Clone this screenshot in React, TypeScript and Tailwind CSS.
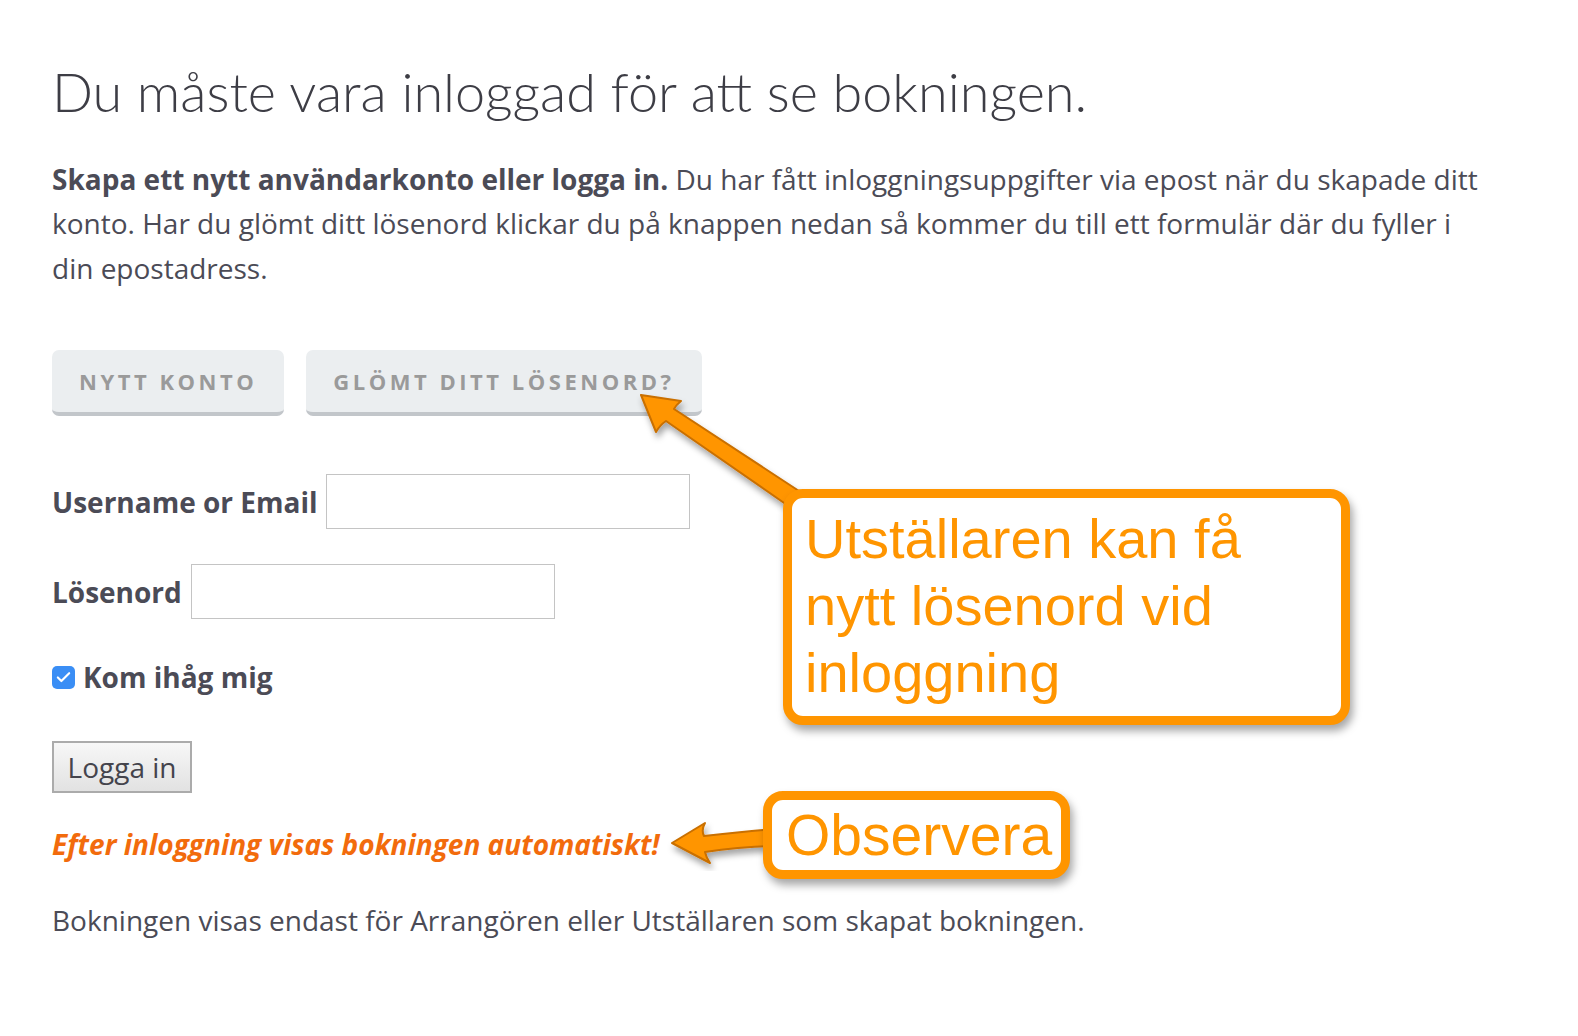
import { Check } from "lucide-react"

function Callout({ className, children }: { className: string; children: React.ReactNode }) {
  return (
    <div
      className={`absolute z-10 rounded-[20px] border-[9px] border-[#ff9500] bg-white shadow-[3px_6px_8px_rgba(0,0,0,0.35)] font-['Liberation_Sans',Arial,sans-serif] text-[#ff9500] ${className}`}
    >
      {children}
    </div>
  )
}

function Arrows() {
  return (
    <svg className="pointer-events-none absolute inset-0 z-[2]" width="1578" height="1036" viewBox="0 0 1578 1036">
      <defs>
        <filter id="drop" x="-20%" y="-20%" width="140%" height="140%">
          <feDropShadow dx="2" dy="5" stdDeviation="3" floodColor="#000" floodOpacity="0.35" />
        </filter>
      </defs>
      <path
        d="M641,395 L681,401 Q676,405 674,409 L799,491 L787,505 L666,421 Q660,425 656,432 Z"
        fill="#ff9500"
        stroke="#c96f00"
        strokeWidth="2"
        strokeLinejoin="round"
        filter="url(#drop)"
      />
      <path
        d="M672,843 L705,823 Q701,830 704,836 Q737,832 774,829 L774,846 Q738,847 705,852 Q706,857 710,863 Z"
        fill="#ff9500"
        stroke="#c96f00"
        strokeWidth="2"
        strokeLinejoin="round"
        filter="url(#drop)"
      />
    </svg>
  )
}

export default function App() {
  return (
    <div className="relative h-[1036px] w-[1578px] overflow-hidden bg-white font-['Open_Sans',sans-serif] text-[#4b4b56]">
      <div className="relative z-[1] px-[52px] pt-[60px]">
        <h1 className="font-['Lato',sans-serif] text-[54px] font-light leading-[1.2] text-[#3d3d45]">
          Du måste vara inloggad för att se bokningen.
        </h1>

        <p className="mt-[32px] max-w-[1435px] text-[28px] leading-[44.5px]">
          <strong className="font-bold">Skapa ett nytt användarkonto eller logga in.</strong> Du har fått
          inloggningsuppgifter via epost när du skapade ditt konto. Har du glömt ditt lösenord klickar du på
          knappen nedan så kommer du till ett formulär där du fyller i din epostadress.
        </p>

        <div className="mt-[60px] flex gap-[22px]">
          <button className="h-[66px] rounded-[7px] border-b-[4px] border-[#c2c6ca] bg-[#ebeef0] px-[27px] text-[22px] font-bold tracking-[0.16em] text-[#9a9a9a]">
            NYTT KONTO
          </button>
          <button className="h-[66px] rounded-[7px] border-b-[4px] border-[#c2c6ca] bg-[#ebeef0] px-[27px] text-[22px] font-bold tracking-[0.16em] text-[#9a9a9a]">
            GLÖMT DITT LÖSENORD?
          </button>
        </div>

        <form className="mt-[58px]">
          <div className="flex items-center gap-[9px]">
            <label className="text-[28px] font-bold">Username or Email</label>
            <input type="text" className="h-[55px] w-[364px] border border-[#c4c4c4] bg-white" />
          </div>
          <div className="mt-[35px] flex items-center gap-[9px]">
            <label className="text-[28px] font-bold">Lösenord</label>
            <input type="password" className="h-[55px] w-[364px] border border-[#c4c4c4] bg-white" />
          </div>
          <div className="mt-[37px] flex items-center gap-[8px]">
            <span className="flex h-[23px] w-[23px] items-center justify-center rounded-[5px] bg-[#3a8ef5]">
              <Check className="h-[17px] w-[17px] text-white" strokeWidth={3} />
            </span>
            <span className="text-[28px] font-bold">Kom ihåg mig</span>
          </div>
          <button
            type="button"
            className="mt-[43px] h-[52px] w-[140px] border-2 border-[#ababab] bg-gradient-to-b from-[#f7f7f7] to-[#e2e2e2] text-[28px] text-[#44444c]"
          >
            Logga in
          </button>
        </form>

        <p className="mt-[30px] text-[28px] font-bold italic text-[#f26b0c]">
          Efter inloggning visas bokningen automatiskt!
        </p>

        <p className="mt-[34px] text-[28px]">
          Bokningen visas endast för Arrangören eller Utställaren som skapat bokningen.
        </p>
      </div>

      <Arrows />

      <Callout className="left-[783px] top-[489px] h-[236px] w-[567px] px-[13px] pt-[7px]">
        <p className="text-[56px] leading-[67px]">
          Utställaren kan få
          <br />
          nytt lösenord vid
          <br />
          inloggning
        </p>
      </Callout>

      <Callout className="left-[763px] top-[791px] flex h-[88px] w-[307px] items-center px-[14px]">
        <p className="text-[57px] leading-[67px]">Observera</p>
      </Callout>
    </div>
  )
}
